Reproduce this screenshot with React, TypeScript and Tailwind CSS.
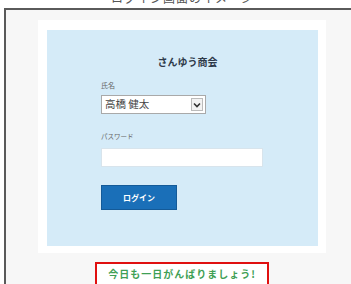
import React from 'react';

const font = { fontFamily: '"Noto Sans CJK JP", "Noto Sans", sans-serif' };

const App: React.FC = () => {
  return (
    <div className="w-[351px] h-[284px] overflow-hidden bg-white" style={font}>
      {/* cut-off caption above the frame */}
      <div className="h-[8px] overflow-hidden flex justify-center pl-[14px]">
        <span className="text-[12px] leading-[12px] -mt-[8px] text-[#555] tracking-[1px]">ログイン画面のイメージ</span>
      </div>

      <div className="ml-[4px] h-[276px] border-t-2 border-l-2 border-[#5a5a5a] bg-[#f7f7f7]">
        {/* white panel */}
        <div className="mt-[10px] ml-[32px] w-[288px] bg-white pt-[10px] pl-[9px] pr-[8px] pb-[7px]">
          <div className="bg-[#d5ebf8] pt-[26px] pb-[36px] pl-[54px]">
            <div className="text-center pr-[44px] text-[10px] leading-[12px] font-bold text-[#2f3a4a]">さんゆう商会</div>

            <div className="mt-[13px] text-[7px] leading-[8px] text-[#666]">氏名</div>
            <div className="mt-[6px] w-[105px] h-[19px] bg-white border border-[#a9a9a9] flex items-center justify-between pl-[3px] pr-[2px]">
              <span className="text-[10.5px] leading-none text-[#444]">高橋 健太</span>
              <span className="w-[12px] h-[13px] border border-[#bbb] bg-[#f3f3f3] flex items-center justify-center">
                <svg width="8" height="6" viewBox="0 0 8 6">
                  <path d="M1 1.5 L4 4.5 L7 1.5" fill="none" stroke="#333" strokeWidth="1.6" />
                </svg>
              </span>
            </div>

            <div className="mt-[18px] text-[6.5px] leading-[8px] text-[#666]">パスワード</div>
            <div className="mt-[8px] w-[162px] h-[19px] bg-white border border-[#d8e4ec]" />

            <button className="mt-[18px] w-[76px] h-[25px] bg-[#1a6fb8] border border-[#145a98] text-white text-[8px] font-bold flex items-center justify-center">
              ログイン
            </button>
          </div>
        </div>

        {/* message box */}
        <div className="mt-[9px] ml-[89px] w-[174px] h-[30px] border-2 border-[#e01010] bg-white flex justify-center pt-[4px]">
          <span className="text-[10px] leading-[12px] font-bold text-[#3f9f55] tracking-[1px]">今日も一日がんばりましょう!</span>
        </div>
      </div>
    </div>
  );
};

export default App;
